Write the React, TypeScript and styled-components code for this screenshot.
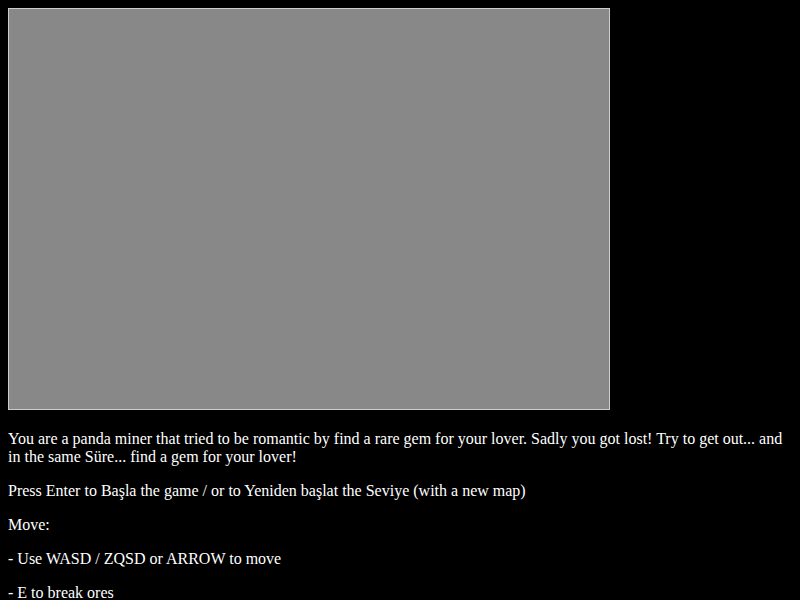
import styled, { createGlobalStyle } from "styled-components"

const GlobalStyle = createGlobalStyle`
  body {
    margin: 8px;
    background: #000;
    color: #fff;
    font-family: "Liberation Serif", "Times New Roman", serif;
    font-size: 16px;
  }
`

const GameCanvas = styled.canvas`
  background: #888888;
  border: 1px solid #cccccc;
`

const Text = styled.p`
  margin: 16px 0;
`

export default function App() {
  return (
    <>
      <GlobalStyle />
      <GameCanvas width={600} height={400} />
      <Text>
        You are a panda miner that tried to be romantic by find a rare gem for your lover. Sadly you got lost! Try to get
        out... and in the same Süre... find a gem for your lover!
      </Text>
      <Text>Press Enter to Başla the game / or to Yeniden başlat the Seviye (with a new map)</Text>
      <Text>Move:</Text>
      <Text>- Use WASD / ZQSD or ARROW to move</Text>
      <Text>- E to break ores</Text>
    </>
  )
}
